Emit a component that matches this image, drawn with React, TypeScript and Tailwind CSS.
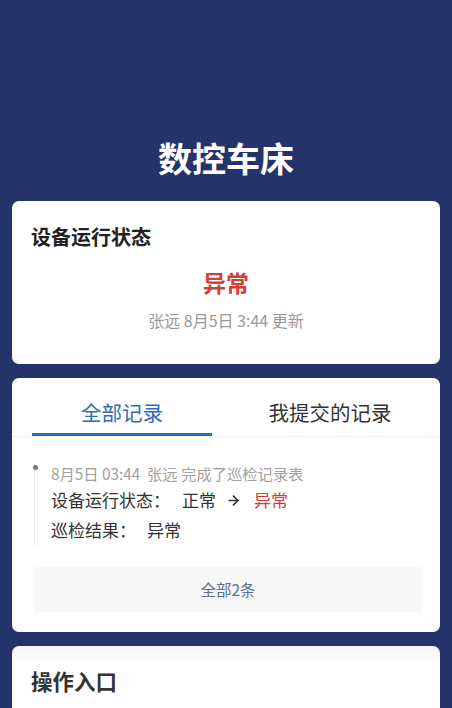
import React from 'react';
import { ArrowRight } from 'lucide-react';

const font = { fontFamily: '"Noto Sans CJK SC", "Noto Sans", sans-serif' };

const StatusCard = () => (
  <div className="mx-3 rounded-[7px] bg-white px-[19px] pt-[22px] pb-[33px]">
    <div className="text-[20px] leading-[28px] font-bold text-[#222]">设备运行状态</div>
    <div className="mt-[16px] text-center text-[23px] leading-[30px] font-bold text-[#d2403a]">异常</div>
    <div className="mt-[12px] text-center text-[16px] leading-[22px] text-[#999]">张远 8月5日 3:44 更新</div>
  </div>
);

const RecordItem = () => (
  <div className="relative ml-[22px] border-l border-[#ececec] pl-[16px] pb-[4px]">
    <span className="absolute left-[-2.5px] top-[2px] h-[5px] w-[5px] rounded-full bg-[#777]" />
    <div className="text-[15.3px] leading-[20px] text-[#a0a0a0]">8月5日 03:44&nbsp; 张远 完成了巡检记录表</div>
    <div className="mt-[5px] flex items-center text-[17px] leading-[24px] text-[#333]">
      <span>设备运行状态：</span>
      <span className="ml-[12px]">正常</span>
      <ArrowRight className="ml-[10px] h-[15px] w-[15px]" strokeWidth={2.6} />
      <span className="ml-[13px] text-[#d2403a]">异常</span>
    </div>
    <div className="mt-[6px] flex text-[17px] leading-[24px] text-[#333]">
      <span>巡检结果：</span>
      <span className="ml-[11px]">异常</span>
    </div>
  </div>
);

const RecordsCard = () => (
  <div className="mx-3 mt-[14px] rounded-[7px] bg-white pb-[20px]">
    <div className="flex border-b border-[#eeeeee] px-[20px]">
      <div className="w-[180px] border-b-[3px] border-[#2e6db4] pt-[20px] pb-[7px] text-center text-[20.5px] leading-[28px] text-[#2e6db4]">
        全部记录
      </div>
      <div className="flex-1 pl-[28px] pt-[20px] pb-[10px] text-center text-[20.5px] leading-[28px] text-[#333]">
        我提交的记录
      </div>
    </div>
    <div className="pt-[26px]">
      <RecordItem />
    </div>
    <div className="mt-[21px] ml-[22px] mr-[18px] flex h-[45px] items-center justify-center rounded-[4px] bg-[#f7f7f8] text-[15.5px] text-[#5f6f8e]">
      全部2条
    </div>
  </div>
);

const ActionsCard = () => (
  <div className="mx-3 mt-[14px] h-[200px] rounded-[7px] bg-gradient-to-b from-[#f6f6f8] to-white to-[20px] px-[19px] pt-[21px]">
    <div className="text-[21.5px] leading-[28px] font-bold text-[#333]">操作入口</div>
  </div>
);

export default function App() {
  return (
    <div className="min-h-[708px] bg-[#24346a] pb-6" style={font}>
      <div className="pt-[138px] pb-[23px] text-center text-[34px] leading-[40px] font-bold text-white">数控车床</div>
      <StatusCard />
      <RecordsCard />
      <ActionsCard />
    </div>
  );
}
